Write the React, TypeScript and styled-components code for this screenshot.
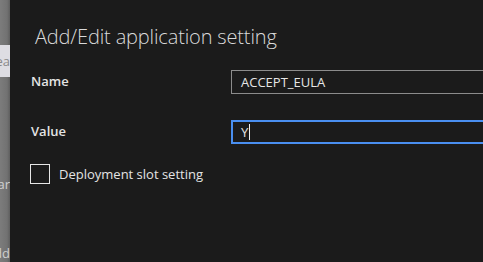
import React from 'react';
import styled, { createGlobalStyle } from 'styled-components';

const GlobalStyle = createGlobalStyle`
  html, body {
    margin: 0;
    padding: 0;
    background: #1b1b1b;
  }
  body {
    font-family: "Open Sans", "Noto Sans", sans-serif;
  }
`;

const Screen = styled.div`
  display: flex;
  width: 483px;
  height: 262px;
  overflow: hidden;
`;

// the page behind the blade, mostly covered
const Backdrop = styled.div`
  width: 10px;
  flex-shrink: 0;
  display: flex;
  flex-direction: column;
  overflow: hidden;
  background: linear-gradient(90deg, #7c7c7c 0%, #727272 70%, #5e5e5e 100%);
`;

const BackRow = styled.div<{ $h: number; $light?: boolean }>`
  height: ${p => p.$h}px;
  flex-shrink: 0;
  display: flex;
  align-items: center;
  justify-content: flex-end;
  white-space: nowrap;
  font-size: 13px;
  color: ${p => (p.$light ? '#8a8a8a' : '#d0d0d0')};
  background: ${p => (p.$light ? '#dedde3' : 'transparent')};
`;

const Panel = styled.div`
  flex: 1;
  background: #1b1b1b;
  padding: 23px 0 0 21px;
`;

const Title = styled.h2`
  margin: 0 0 19px 4px;
  font-size: 20px;
  font-weight: 300;
  letter-spacing: -0.15px;
  line-height: 28px;
  color: #dadada;
`;

const Row = styled.div`
  display: grid;
  grid-template-columns: 200px 1fr;
  align-items: center;
  margin-bottom: 26px;
`;

const Label = styled.label`
  font-size: 13px;
  font-weight: 600;
  color: #e4e4e4;
  line-height: 18px;
  align-self: start;
  padding-top: 2px;
`;

const Field = styled.div<{ $focused?: boolean }>`
  box-sizing: border-box;
  height: 24px;
  margin-right: -8px;
  display: flex;
  align-items: center;
  padding-left: ${p => (p.$focused ? '8px' : '9px')};
  border: ${p => (p.$focused ? '2px solid #4a8ff0' : '1px solid #8c8c8c')};
  font-size: 13px;
  color: #e6e6e6;
`;

const Caret = styled.span`
  display: inline-block;
  width: 1px;
  height: 16px;
  margin-left: 1px;
  background: #f0f0f0;
`;

const CheckRow = styled.label`
  display: flex;
  align-items: center;
  gap: 9px;
  margin-top: -6px;
  font-size: 13px;
  color: #e4e4e4;
`;

const Box = styled.span`
  box-sizing: border-box;
  width: 20px;
  height: 20px;
  border: 1px solid #e6e6e6;
  margin-left: -1px;
`;

export default function App() {
  return (
    <>
      <GlobalStyle />
      <Screen>
        <Backdrop>
          <BackRow $h={45} />
          <BackRow $h={32} $light>Sea</BackRow>
          <BackRow $h={97} />
          <BackRow $h={20}>Clear</BackRow>
          <BackRow $h={50} />
          <BackRow $h={18}>Add</BackRow>
        </Backdrop>
        <Panel>
          <Title>Add/Edit application setting</Title>
          <Row>
            <Label>Name</Label>
            <Field>ACCEPT_EULA</Field>
          </Row>
          <Row>
            <Label>Value</Label>
            <Field $focused>
              Y<Caret />
            </Field>
          </Row>
          <CheckRow>
            <Box />
            Deployment slot setting
          </CheckRow>
        </Panel>
      </Screen>
    </>
  );
}
